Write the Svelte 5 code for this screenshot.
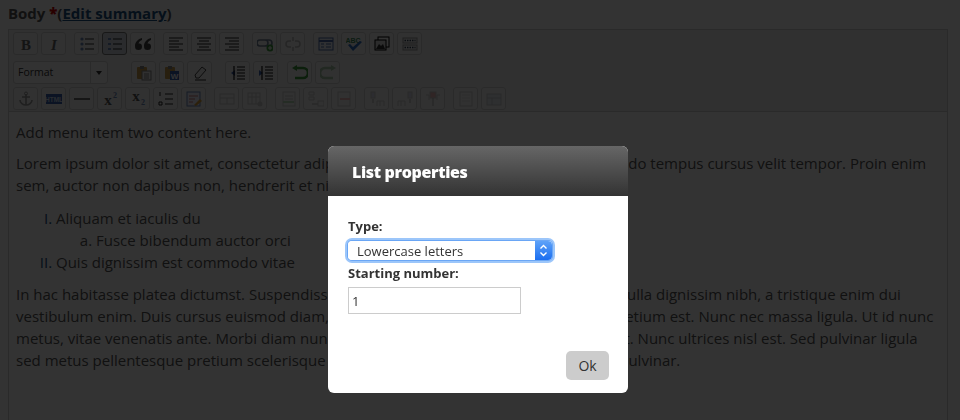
<script lang="ts">
  const ln = (d: string, c = '#555') => `<path d="${d}" stroke="${c}" fill="none" stroke-width="1.2"/>`
  const icons: Record<string, string> = {
    bold: `<text x="8" y="14" text-anchor="middle" font-family="Liberation Serif" font-weight="700" font-size="15" fill="#666">B</text>`,
    italic: `<text x="8" y="14" text-anchor="middle" font-family="Liberation Serif" font-style="italic" font-weight="700" font-size="15" fill="#666">I</text>`,
    ul: `<circle cx="3" cy="3" r="1.6" fill="#6a86b8"/><circle cx="3" cy="8" r="1.6" fill="#6a86b8"/><circle cx="3" cy="13" r="1.6" fill="#6a86b8"/>` + ln('M6 3h9M6 8h9M6 13h9', '#333'),
    ol: `<path d="M1 2h3v2h-3zM1 7h3v2h-3zM1 12h3v2h-3z" fill="#6a86b8"/>` + ln('M6 3h9M6 8h9M6 13h9', '#222'),
    quote: `<path d="M7 2C3 3 0 6 0 10c0 3 1 4 3.5 4S7 13 7 10.5 5.5 7 3.5 7.5C4 5.5 5.5 4.5 7 4zM16 2c-4 1-7 4-7 8 0 3 1 4 3.5 4s3.5-1 3.5-3.5S14.5 7 12.5 7.5C13 5.5 14.5 4.5 16 4z" fill="#444"/>`,
    left: ln('M1 2h14M1 5h10M1 8h14M1 11h10M1 14h14', '#222'),
    center: ln('M1 2h14M3 5h10M1 8h14M3 11h10M1 14h14', '#222'),
    right: ln('M1 2h14M5 5h10M1 8h14M5 11h10M1 14h14', '#222'),
    link: `<path d="M3 4h5a3 3 0 0 1 0 6H3a3 3 0 0 1 0-6zM7 4h5a3 3 0 0 1 0 6H8" fill="none" stroke="#6f7f94" stroke-width="1.6"/><circle cx="13" cy="12" r="3.5" fill="#3f9a3f"/><path d="M11 12h4M13 10v4" stroke="#fff"/>`,
    unlink: `<path d="M6 5H4a3 3 0 0 0 0 6h2M10 5h2a3 3 0 0 1 0 6h-2M8 1v4M8 11v4" fill="none" stroke="#bbb" stroke-width="1.6"/>`,
    form: `<rect x="1" y="2" width="14" height="12" fill="#e8eef7" stroke="#4a6ca8"/><path d="M1 5h14" stroke="#4a6ca8" stroke-width="2"/><path d="M3 8h3M3 11h3M8 8h5M8 11h5" stroke="#4a6ca8"/>`,
    spell: `<text x="7" y="7" text-anchor="middle" font-family="Liberation Sans" font-weight="700" font-size="7" fill="#3a8a5a">ABC</text><path d="M2 9l5 6 9-9-2-1-7 6-3-3z" fill="#2f6fc0"/>`,
    image: `<rect x="4" y="1" width="11" height="10" fill="#fff" stroke="#000"/><rect x="1" y="4" width="11" height="10" fill="#ddd" stroke="#000"/><path d="M2 13l3-5 2 2 2-2 2 5z" fill="#333"/>`,
    chars: `<rect x="1" y="2" width="14" height="5" fill="#eee" stroke="#999"/><rect x="1" y="9" width="14" height="5" fill="#eee" stroke="#999"/><path d="M2.5 4.5h11M2.5 11.5h11" stroke="#345" stroke-width="1.6" stroke-dasharray="1.5 1"/>`,
    paste: `<rect x="1" y="2" width="10" height="12" rx="1" fill="#c59a4a"/><rect x="4" y="1" width="4" height="3" fill="#888"/><rect x="6" y="6" width="9" height="9" fill="#eee" stroke="#888"/><path d="M8 9h5M8 11h5M8 13h5" stroke="#888"/>`,
    word: `<rect x="1" y="2" width="10" height="12" rx="1" fill="#c59a4a"/><rect x="4" y="1" width="4" height="3" fill="#888"/><rect x="6" y="6" width="9" height="9" fill="#3a62b0"/><text x="10.5" y="14" text-anchor="middle" font-family="Liberation Sans" font-weight="700" font-size="8" fill="#fff">W</text>`,
    erase: `<path d="M3 10l7-8 4 3-7 8H4z" fill="#eee" stroke="#444"/><path d="M3 15h11" stroke="#222"/>`,
    outdent: `<path d="M1 8l4-3v6z" fill="#3a62b0"/>` + ln('M7 2h8M7 5h8M7 8h8M7 11h8M7 14h8M4 1v14', '#111'),
    indent: `<path d="M5 8L1 5v6z" fill="#3a62b0"/>` + ln('M7 2h8M7 5h8M7 8h8M7 11h8M7 14h8M4 1v14', '#111'),
    undo: `<path d="M4 3h7a4 4 0 0 1 0 10H3" fill="none" stroke="#3f9a3f" stroke-width="2.6"/><path d="M6 0v6L1 3z" fill="#3f9a3f" transform="translate(-1 0)"/>`,
    redo: `<path d="M12 3H5a4 4 0 0 0 0 10h8" fill="none" stroke="#a8c8a8" stroke-width="2.6"/><path d="M11 0v6l5-3z" fill="#a8c8a8"/>`,
    anchor: `<path d="M8 3v11M4 6h8M2 9c0 3 3 5 6 5s6-2 6-5" fill="none" stroke="#999" stroke-width="1.6"/><circle cx="8" cy="2.5" r="1.5" fill="none" stroke="#999"/>`,
    html: `<rect x="0" y="3" width="16" height="10" fill="#3a62b0"/><text x="8" y="11" text-anchor="middle" font-family="Liberation Sans" font-weight="700" font-size="6.5" fill="#cde">HTML</text>`,
    hr: ln('M0 8h16', '#111'),
    sup: `<text x="6" y="14" text-anchor="middle" font-family="Liberation Serif" font-weight="700" font-size="15" fill="#555">x</text><text x="13" y="7" text-anchor="middle" font-family="Liberation Serif" font-weight="700" font-size="8" fill="#6a86b8">2</text>`,
    sub: `<text x="6" y="10" text-anchor="middle" font-family="Liberation Serif" font-weight="700" font-size="15" fill="#555">x</text><text x="13" y="14" text-anchor="middle" font-family="Liberation Serif" font-weight="700" font-size="8" fill="#6a86b8">2</text>`,
    listprop: `<path d="M2 1v4M1 11h3v3H1z" stroke="#222" fill="none"/>` + ln('M7 3h8M7 8h8M7 13h8', '#222'),
    template: `<rect x="1" y="1" width="13" height="14" fill="#eef" stroke="#6a86b8"/><path d="M3 5h9M3 8h6M3 11h4" stroke="#c77"/><path d="M8 14l6-6 2 2-6 5z" fill="#d9a13a"/>`,
    cell: `<rect x="1" y="3" width="14" height="10" fill="#f4f4f4" stroke="#ccc"/><path d="M1 7h14M8 7v6" stroke="#ccc"/>`,
    cellprop: `<rect x="1" y="2" width="12" height="11" fill="#f4f4f4" stroke="#ccc"/><path d="M1 6h12M5 2v11M9 2v11" stroke="#ccc"/><circle cx="13" cy="13" r="2.5" fill="#ccc"/>`,
    rowleft: `<rect x="3" y="1" width="12" height="14" fill="#f4f4f4" stroke="#ccc"/><path d="M5 5h8M5 8h8" stroke="#ccc"/><path d="M3 11h11" stroke="#bdb" stroke-width="2"/>`,
    rowdown: `<path d="M1 1h5v3H1zM1 6h5v3H1z" fill="none" stroke="#ccc"/><path d="M4 13h6" stroke="#aaa"/><rect x="10" y="10" width="6" height="5" fill="none" stroke="#ccc"/>`,
    rowred: `<rect x="2" y="1" width="12" height="14" fill="#f4f4f4" stroke="#ccc"/><path d="M4 8h10" stroke="#ebb" stroke-width="2"/>`,
    colleft: `<rect x="2" y="1" width="4" height="6" fill="#dde" stroke="#ccc"/><path d="M4 8v4" stroke="#aaa"/><path d="M8 10h7v5M11 10v5M8 10v5" fill="none" stroke="#ccc"/>`,
    colright: `<rect x="11" y="1" width="4" height="6" fill="#dde" stroke="#ccc"/><path d="M13 8v4" stroke="#aaa"/><path d="M1 10h7v5M4 10v5M1 10v5" fill="none" stroke="#ccc"/>`,
    coldel: `<rect x="5" y="1" width="6" height="6" fill="#ebb" stroke="#ccc"/><path d="M8 7v8" stroke="#aaa"/><path d="M1 4h3v5M15 4h-3v5" fill="none" stroke="#ccc"/>`,
    doc: `<rect x="2" y="1" width="12" height="14" fill="#f4f4f4" stroke="#ccc"/><path d="M4 4h8M4 7h8M4 10h8" stroke="#ddd"/>`,
    table: `<rect x="1" y="3" width="14" height="11" fill="#e3e8f0" stroke="#ccc"/><path d="M1 7h14M6 7v7" stroke="#ccc"/>`
  }

  const rows: string[][][] = [
    [['bold', 'italic'], ['ul', 'ol', 'quote'], ['left', 'center', 'right'], ['link', 'unlink'], ['form', 'spell', 'image', 'chars']],
    [['paste', 'word', 'erase'], ['outdent', 'indent'], ['undo', 'redo']],
    [['anchor', 'html', 'hr', 'sup', 'sub', 'listprop', 'template'], ['cell', 'cellprop'], ['rowleft', 'rowdown', 'rowred'], ['colleft', 'colright', 'coldel'], ['doc', 'table']]
  ]
</script>

<style>
  :global(body) {
    margin: 0;
    background: #fff;
    font-family: "Open Sans", sans-serif;
    overflow: hidden;
  }

  .page {
    height: 420px;
    padding: 5px 12px 0 8px;
    box-sizing: border-box;
    overflow: hidden;
  }

  .label {
    font-size: 15px;
    font-weight: 700;
    line-height: 17px;
    color: #555;
    margin-bottom: 7px;
  }

  .label b { color: #c00; }
  .label a { color: #1a4f80; text-decoration: underline; }

  .editor {
    border: 1px solid #d0d0d0;
    height: 400px;
  }

  .toolbar {
    background: #f0f0f0;
    border-bottom: 1px solid #d0d0d0;
    padding: 2px 4px 1px;
    height: 82px;
    box-sizing: border-box;
    display: flex;
    flex-direction: column;
    gap: 3px;
  }

  .row, .group { display: flex; }
  .row { gap: 8px; }
  .row.first { margin-bottom: 3px; }
  .row.second { gap: 9px; }
  .row.second .group:nth-child(2) { margin-right: 4px; }
  .group { gap: 3px; }

  .btn {
    width: 25px;
    height: 23px;
    box-sizing: border-box;
    border: 1px solid #d2d2d2;
    border-radius: 3px;
    background: #f4f4f4;
    display: flex;
    align-items: center;
    justify-content: center;
  }

  .btn.on {
    background: #cfd6e0;
    border-color: #777;
  }

  .combo {
    width: 95px;
    height: 23px;
    box-sizing: border-box;
    border: 1px solid #d2d2d2;
    border-radius: 3px;
    background: #f8f8f8;
    display: flex;
    font-size: 10.5px;
    line-height: 21px;
    color: #333;
    margin-right: 14px;
  }

  .combo span:first-child { flex: 1; padding-left: 4px; }

  .combo .arrow {
    width: 16px;
    border-left: 1px solid #d2d2d2;
    display: flex;
    align-items: center;
    justify-content: center;
  }

  .combo .arrow::after {
    content: "";
    border: 3.5px solid transparent;
    border-top: 4px solid #333;
    border-bottom: 0;
  }

  .content {
    padding: 9px 7px;
    font-size: 15px;
    line-height: 22px;
    color: #555;
    white-space: nowrap;
  }

  .content p { margin: 0 0 9px; }
  .content ol { margin: 11px 0 10px; padding-left: 40px; }
  .content ol ol { margin: 0; list-style-type: lower-alpha; }
  .content .top { list-style-type: upper-roman; }
  .content li::marker { color: #1a4f80; }
  .content ol ol li::marker { color: #555; }

  .overlay {
    position: fixed;
    inset: 0;
    background: rgba(0, 0, 0, 0.8);
  }

  .modal {
    position: fixed;
    left: 328px;
    top: 146px;
    width: 300px;
    height: 247px;
    border-radius: 6px;
    background: #fff;
    overflow: hidden;
    display: flex;
    flex-direction: column;
  }

  .modal header {
    height: 50px;
    flex: none;
    box-sizing: border-box;
    padding: 0 24px;
    background: linear-gradient(#666, #333);
    color: #fff;
    font-size: 16px;
    font-weight: 800;
    letter-spacing: -0.35px;
    line-height: 52px;
  }

  .modal form {
    flex: 1;
    display: flex;
    flex-direction: column;
    padding: 21px 19px 13px 20px;
  }

  label {
    font-size: 13px;
    font-weight: 700;
    line-height: 18px;
    color: #333;
    display: block;
  }

  .select {
    position: relative;
    width: 204px;
    height: 19px;
    margin: 6px 0 4px;
    border-radius: 4px;
    box-shadow: 0 0 0 1px #6aa6f5, 0 0 0 3px #9cc6fa;
  }

  select {
    appearance: none;
    display: block;
    width: 100%;
    height: 100%;
    box-sizing: border-box;
    border: 0;
    border-radius: 4px;
    padding: 0 0 0 9px;
    background: #fff;
    font: 13px "Open Sans", sans-serif;
    color: #333;
  }

  .stepper {
    position: absolute;
    right: 0;
    top: 0;
    width: 17px;
    height: 19px;
    border-radius: 0 4px 4px 0;
    background: linear-gradient(#5ea2f8, #1b6ef0);
    display: block;
  }

  input {
    display: block;
    width: 173px;
    height: 27px;
    box-sizing: border-box;
    margin-top: 5px;
    border: 1px solid #ccc;
    padding: 0 3px;
    font: 13px "Open Sans", sans-serif;
    color: #333;
    outline: none;
  }

  button {
    margin-top: auto;
    align-self: flex-end;
    width: 43px;
    height: 29px;
    border: 0;
    border-radius: 5px;
    background: #ccc;
    color: #333;
    font: 14px "Open Sans", sans-serif;
    padding: 0;
  }
</style>

<div class="page">
  <div class="label">Body <b>*</b>(<a href="#summary">Edit summary</a>)</div>
  <div class="editor">
    <div class="toolbar">
      {#each rows as row, r}
        <div class="row" class:first={r === 0} class:second={r === 1}>
          {#if r === 1}
            <div class="combo"><span>Format</span><span class="arrow"></span></div>
          {/if}
          {#each row as group}
            <div class="group">
              {#each group as name}
                <span class="btn" class:on={name === 'ol'}>
                  <svg width="16" height="16" viewBox="0 0 16 16">{@html icons[name]}</svg>
                </span>
              {/each}
            </div>
          {/each}
        </div>
      {/each}
    </div>
    <div class="content">
      <p>Add menu item two content here.</p>
      <p>Lorem ipsum dolor sit amet, consectetur adipiscing elit. Sed id nisl vitae uti arcu commodo tempus cursus velit tempor. Proin enim<br>sem, auctor non dapibus non, hendrerit et nisi.</p>
      <ol class="top">
        <li>Aliquam et iaculis du
          <ol><li>Fusce bibendum auctor orci</li></ol>
        </li>
        <li>Quis dignissim est commodo vitae</li>
      </ol>
      <p>In hac habitasse platea dictumst. Suspendisse potenti. Maecenas sit amet ante ut nisil nulla dignissim nibh, a tristique enim dui<br>vestibulum enim. Duis cursus euismod diam, sed porttitor lorem ac ipsum dolori nec pretium est. Nunc nec massa ligula. Ut id nunc<br>metus, vitae venenatis ante. Morbi diam nunc, aliquet vitae lorem sit amet, cursus at elit. Nunc ultrices nisl est. Sed pulvinar ligula<br>sed metus pellentesque pretium scelerisque id, at rhoncus lorem ac nunc in tellus nec pulvinar.</p>
    </div>
  </div>
</div>

<div class="overlay"></div>

<div class="modal">
  <header>List properties</header>
  <form>
    <label for="type">Type:</label>
    <div class="select">
      <select id="type">
        <option>Lowercase letters</option>
      </select>
      <svg class="stepper" viewBox="0 0 17 19"><path d="M5.5 7.5l3-3 3 3M5.5 11.5l3 3 3-3" fill="none" stroke="#fff" stroke-width="1.4"/></svg>
    </div>
    <label for="start">Starting number:</label>
    <input id="start" value="1">
    <button type="button">Ok</button>
  </form>
</div>
